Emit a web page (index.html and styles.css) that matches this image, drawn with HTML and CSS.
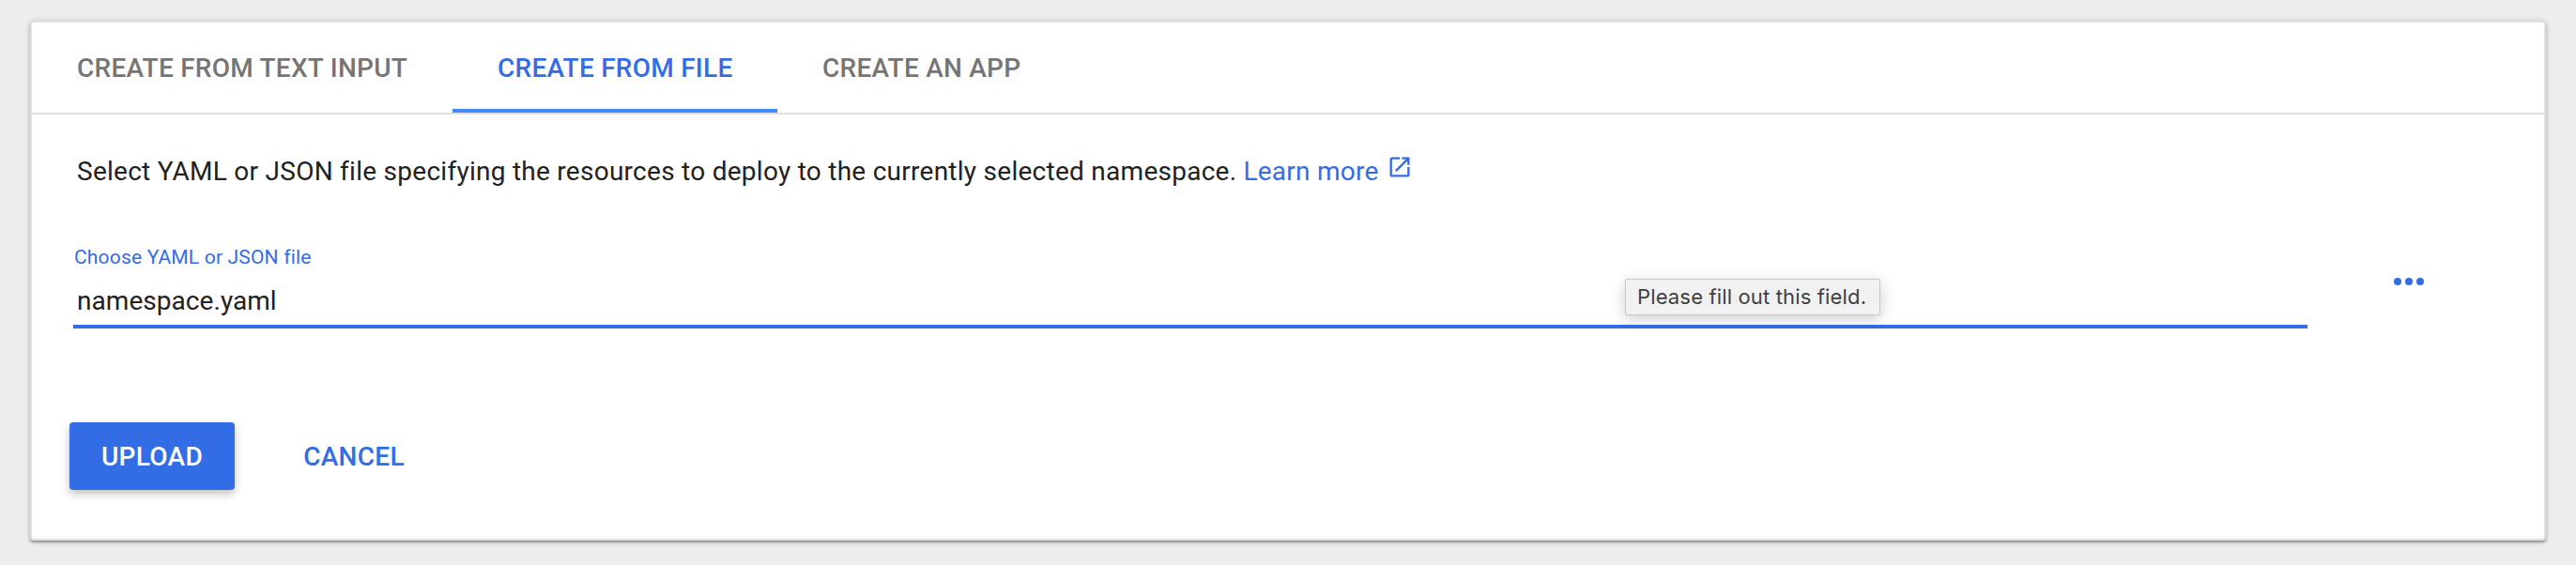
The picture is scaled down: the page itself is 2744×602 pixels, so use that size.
FILE: index.html
```html
<!DOCTYPE html>
<html lang="en">
<head>
<meta charset="utf-8">
<title>Create resource</title>
<link rel="stylesheet" href="styles.css">
</head>
<body>
<main class="card">
  <nav class="tabs">
    <a class="tab tab-text">CREATE FROM TEXT INPUT</a>
    <a class="tab tab-file active">CREATE FROM FILE</a>
    <a class="tab tab-app">CREATE AN APP</a>
  </nav>
  <section class="content">
    <p class="description"><span>Select YAML or JSON file specifying the resources to deploy to the currently selected namespace.</span><a class="learn-more"><span>Learn more</span><svg class="external" viewBox="0 0 24 24"><path d="M19 19H5V5h7V3H5c-1.11 0-2 .9-2 2v14c0 1.1.89 2 2 2h14c1.1 0 2-.9 2-2v-7h-2v7zM14 3v2h3.59l-9.83 9.83 1.41 1.41L19 6.41V10h2V3h-7z"/></svg></a></p>
    <div class="upload-row">
      <div class="field">
        <label class="label">Choose YAML or JSON file</label>
        <div class="value">namespace.yaml</div>
        <div class="tooltip">Please fill out this field.</div>
      </div>
      <button class="more" aria-label="Browse"><svg class="dots" viewBox="0 0 32 8"><circle cx="4" cy="4" r="4"/><circle cx="16" cy="4" r="4"/><circle cx="28" cy="4" r="4"/></svg></button>
    </div>
    <div class="actions">
      <button class="button primary">UPLOAD</button>
      <button class="button">CANCEL</button>
    </div>
  </section>
</main>
</body>
</html>
```
FILE: styles.css
```css
* { box-sizing: border-box; }
body {
  margin: 0;
  padding: 22px 32px 26px;
  height: 602px;
  background: #eee;
  color: #212121;
  font: 28px/40px Roboto, sans-serif;
  white-space: nowrap;
  overflow: hidden;
}
.card {
  height: 554px;
  background: #fff;
  border: 2px solid #e0e0e0;
  border-radius: 4px;
  box-shadow: 0 2px 2px rgba(0,0,0,.28), 0 1px 6px rgba(0,0,0,.24);
}
.tabs {
  display: flex;
  height: 98px;
  border-bottom: 2px solid #e0e0e0;
}
.tab {
  height: 96px;
  padding: 0 48px;
  line-height: 98px;
  font-weight: 500;
  letter-spacing: .25px;
  color: #757575;
}
.tab-text { width: 448px; }
.tab-file { width: 346px; }
.tab.active {
  color: #326de6;
  box-shadow: inset 0 -4px #448aff;
}
.content { padding: 41px 40px 0 44px; }
.description {
  display: flex;
  margin: 0 0 0 4px;
  height: 40px;
  letter-spacing: .265px;
}
.learn-more {
  display: flex;
  margin-left: 7px;
  color: #326de6;
}
.external {
  width: 28px;
  height: 28px;
  margin: 1px 0 0 8px;
  fill: #326de6;
}
.upload-row {
  display: flex;
  margin-top: 56px;
  height: 91px;
}
.field {
  position: relative;
  width: 2380px;
  border-bottom: 4px solid #326de6;
}
.label {
  display: block;
  padding-left: 1px;
  line-height: 30px;
  font-size: 21px;
  letter-spacing: .18px;
  color: #326de6;
}
.value {
  margin-top: 12px;
  padding-left: 4px;
  letter-spacing: .05px;
}
.tooltip {
  position: absolute;
  left: 1653px;
  top: 38px;
  width: 272px;
  height: 39px;
  padding-left: 12px;
  background: #f1f1f1;
  border: 1px solid #c8c8c8;
  border-radius: 2px;
  box-shadow: 0 4px 16px rgba(0,0,0,.2);
  font: 22px/37px Inter, sans-serif;
  letter-spacing: .15px;
  color: #404040;
}
button {
  border: 0;
  padding: 0;
  background: transparent;
  font: inherit;
}
.more {
  width: 32px;
  height: 8px;
  margin: 37px 0 0 92px;
  display: flex;
}
.dots {
  width: 32px;
  height: 8px;
  fill: #326de6;
}
.actions {
  display: flex;
  gap: 39px;
  margin: 100px 0 0 -4px;
}
.button {
  width: 176px;
  height: 72px;
  padding-top: 2px;
  border-radius: 4px;
  font-weight: 500;
  letter-spacing: .28px;
  color: #326de6;
}
.button.primary {
  background: #326de6;
  color: #fff;
  box-shadow: 0 4px 10px rgba(0,0,0,.26);
}
```
